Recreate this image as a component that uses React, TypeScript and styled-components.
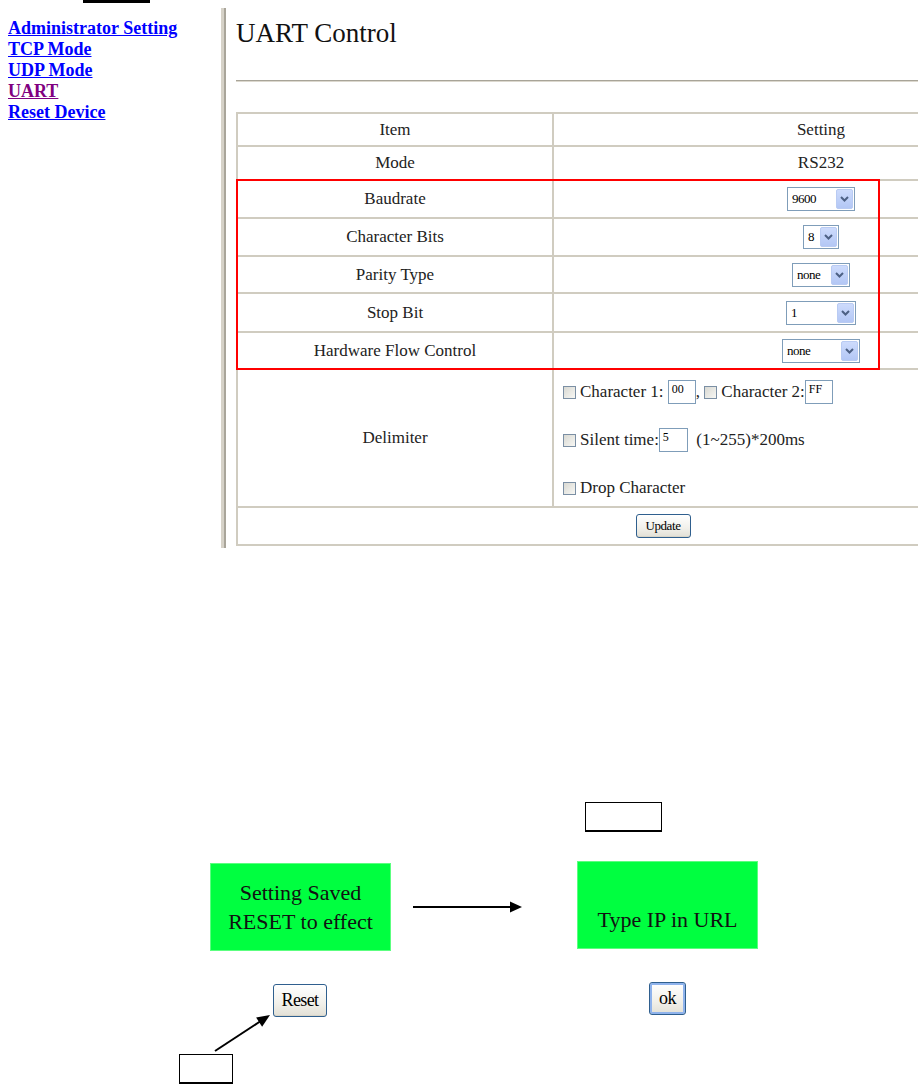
import React from 'react';
import styled, { createGlobalStyle } from 'styled-components';

const SERIF = `'Liberation Serif', 'Times New Roman', serif`;

const GlobalStyle = createGlobalStyle`
  html, body {
    margin: 0;
    padding: 0;
    background: #fff;
  }
  body {
    width: 918px;
    height: 1085px;
    overflow: hidden;
    font-family: ${SERIF};
    color: #222;
  }
`;

const Page = styled.div`
  width: 918px;
  height: 1085px;
  overflow: hidden;
`;

const TopMark = styled.div`
  margin-left: 83px;
  width: 67px;
  height: 3px;
  background: #000;
`;

const TopSection = styled.div`
  display: flex;
  height: 540px;
  margin-top: 5px;
`;

const Sidebar = styled.nav`
  width: 221px;
  box-sizing: border-box;
  padding: 10px 0 0 8px;
  display: flex;
  flex-direction: column;
  align-items: flex-start;
`;

const NavLink = styled.a<{ $visited?: boolean }>`
  font-family: ${SERIF};
  font-weight: bold;
  font-size: 18px;
  line-height: 21px;
  color: ${(p) => (p.$visited ? '#800080' : '#0000ff')};
  text-decoration: underline;
  cursor: pointer;
`;

const Divider = styled.div`
  width: 5px;
  box-sizing: border-box;
  border-left: 3px solid #d6d2c8;
  border-right: 2px solid #a9a59a;
`;

const Main = styled.main`
  flex: 1;
  min-width: 0;
  margin-left: 10px;
  overflow: hidden;
`;

const Title = styled.h1`
  margin: 9px 0 0;
  font-family: ${SERIF};
  font-weight: normal;
  font-size: 27px;
  line-height: 32px;
  color: #111;
`;

const Rule = styled.div`
  margin-top: 31px;
  height: 0;
  border-top: 1px solid #a8a498;
  border-bottom: 1px solid #dcd8ce;
`;

const TableWrap = styled.div`
  position: relative;
  margin-top: 30px;
  width: 852px;
`;

const Table = styled.table`
  width: 852px;
  border-collapse: collapse;
  table-layout: fixed;
  border: 2px solid #d0ccc0;
`;

const Row = styled.tr<{ $h: number }>`
  height: ${(p) => p.$h}px;
`;

const Cell = styled.td`
  border: 2px solid #d0ccc0;
  padding: 0;
  text-align: center;
  vertical-align: middle;
  font-family: ${SERIF};
  font-size: 17px;
  line-height: 20px;
  color: #222;
`;

const DelimCell = styled(Cell)`
  text-align: left;
  padding: 10px 0 6px 9px;
`;

const Annotation = styled.div`
  position: absolute;
  left: 0;
  top: 67px;
  width: 644px;
  height: 191px;
  box-sizing: border-box;
  border: 2px solid #ff0000;
  pointer-events: none;
`;

const SelectBox = styled.div<{ $w: number }>`
  display: inline-flex;
  align-items: stretch;
  justify-content: space-between;
  width: ${(p) => p.$w}px;
  height: 24px;
  box-sizing: border-box;
  border: 1px solid #7f9db9;
  background: #fff;
  padding: 1px;
  vertical-align: middle;
`;

const SelectText = styled.span`
  font-family: ${SERIF};
  font-size: 13px;
  line-height: 20px;
  letter-spacing: -0.5px;
  padding-left: 3px;
  color: #000;
`;

const SelectArrow = styled.span`
  width: 17px;
  box-sizing: border-box;
  background: linear-gradient(#cddbfc, #b3c7f5);
  border: 1px solid #b9cbf3;
  border-radius: 2px;
  display: flex;
  align-items: center;
  justify-content: center;
`;

const DelimLines = styled.div`
  display: flex;
  flex-direction: column;
  gap: 24px;
`;

const DelimLine = styled.div`
  display: flex;
  align-items: center;
  height: 24px;
  font-family: ${SERIF};
  font-size: 17px;
  line-height: 20px;
  color: #222;
  white-space: pre;
`;

const Check = styled.span`
  width: 13px;
  height: 13px;
  box-sizing: border-box;
  border: 1px solid #7b8fa4;
  background: linear-gradient(135deg, #d9d9d3, #f7f7f4);
  margin-right: 4px;
  flex: none;
`;

const TextInput = styled.span<{ $w: number }>`
  width: ${(p) => p.$w}px;
  height: 24px;
  box-sizing: border-box;
  border: 1px solid #7f9db9;
  font-family: ${SERIF};
  font-size: 12px;
  line-height: 14px;
  color: #000;
  padding: 1px 0 0 3px;
  flex: none;
`;

const XpButton = styled.button<{ $default?: boolean }>`
  box-sizing: border-box;
  padding: 0;
  border: 1px solid #2f5f8e;
  border-radius: 3px;
  background: linear-gradient(#ffffff, #f1f0ea 60%, #e2e0d6);
  color: #000;
  font-family: ${SERIF};
  box-shadow: ${(p) =>
    p.$default ? 'inset 0 0 0 2px #8fb3ec' : 'inset 0 -1px 0 #d8d5c8'};
`;

const UpdateButton = styled(XpButton)`
  width: 55px;
  height: 24px;
  font-size: 13px;
  letter-spacing: -0.4px;
`;

const Diagram = styled.section`
  position: relative;
  height: 537px;
`;

const Note = styled.div<{ $x: number; $y: number }>`
  position: absolute;
  left: ${(p) => p.$x}px;
  top: ${(p) => p.$y}px;
  width: 181px;
  height: 88px;
  box-sizing: border-box;
  border: 1px solid #5cff80;
  background: #00ff40;
  display: flex;
  flex-direction: column;
  justify-content: center;
  align-items: center;
  text-align: center;
  font-family: ${SERIF};
  font-size: 22px;
  line-height: 29px;
  color: #111;
  white-space: pre;
`;

const Frame = styled.div<{ $x: number; $y: number; $w: number; $h: number }>`
  position: absolute;
  left: ${(p) => p.$x}px;
  top: ${(p) => p.$y}px;
  width: ${(p) => p.$w}px;
  height: ${(p) => p.$h}px;
  box-sizing: border-box;
  border: 1px solid #000;
  border-bottom-width: 2px;
`;

const Placed = styled.div<{ $x: number; $y: number }>`
  position: absolute;
  left: ${(p) => p.$x}px;
  top: ${(p) => p.$y}px;
  line-height: 0;
`;

const DiagramButton = styled(XpButton)<{ $w: number }>`
  width: ${(p) => p.$w}px;
  height: 33px;
  font-size: 18px;
  letter-spacing: -0.6px;
`;

const Chevron = () => (
  <svg width="9" height="6" viewBox="0 0 9 6">
    <path d="M1 1 L4.5 4.5 L8 1" fill="none" stroke="#4d6185" strokeWidth="2" />
  </svg>
);

const Select = ({ value, width }: { value: string; width: number }) => (
  <SelectBox $w={width}>
    <SelectText>{value}</SelectText>
    <SelectArrow>
      <Chevron />
    </SelectArrow>
  </SelectBox>
);

const settings = [
  { item: 'Baudrate', value: '9600', w: 68, h: 38 },
  { item: 'Character Bits', value: '8', w: 36, h: 38 },
  { item: 'Parity Type', value: 'none', w: 58, h: 37 },
  { item: 'Stop Bit', value: '1', w: 70, h: 39 },
  { item: 'Hardware Flow Control', value: 'none', w: 78, h: 37 },
];

const navItems = [
  { label: 'Administrator Setting' },
  { label: 'TCP Mode' },
  { label: 'UDP Mode' },
  { label: 'UART', visited: true },
  { label: 'Reset Device' },
];

export default function App() {
  return (
    <Page>
      <GlobalStyle />
      <TopMark />
      <TopSection>
        <Sidebar>
          {navItems.map((n) => (
            <NavLink key={n.label} $visited={n.visited}>
              {n.label}
            </NavLink>
          ))}
        </Sidebar>
        <Divider />
        <Main>
          <Title>UART Control</Title>
          <Rule />
          <TableWrap>
            <Table>
              <colgroup>
                <col style={{ width: 316 }} />
                <col style={{ width: 536 }} />
              </colgroup>
              <tbody>
                <Row $h={33}>
                  <Cell>Item</Cell>
                  <Cell>Setting</Cell>
                </Row>
                <Row $h={34}>
                  <Cell>Mode</Cell>
                  <Cell>RS232</Cell>
                </Row>
                {settings.map((s) => (
                  <Row key={s.item} $h={s.h}>
                    <Cell>{s.item}</Cell>
                    <Cell>
                      <Select value={s.value} width={s.w} />
                    </Cell>
                  </Row>
                ))}
                <Row $h={136}>
                  <Cell>Delimiter</Cell>
                  <DelimCell>
                    <DelimLines>
                      <DelimLine>
                        <Check />
                        {'Character 1: '}
                        <TextInput $w={28}>00</TextInput>
                        {', '}
                        <Check />
                        {'Character 2:'}
                        <TextInput $w={28}>FF</TextInput>
                      </DelimLine>
                      <DelimLine>
                        <Check />
                        {'Silent time:'}
                        <TextInput $w={29}>5</TextInput>
                        {'  (1~255)*200ms'}
                      </DelimLine>
                      <DelimLine>
                        <Check />
                        {'Drop Character'}
                      </DelimLine>
                    </DelimLines>
                  </DelimCell>
                </Row>
                <Row $h={38}>
                  <Cell colSpan={2}>
                    <UpdateButton>Update</UpdateButton>
                  </Cell>
                </Row>
              </tbody>
            </Table>
            <Annotation />
          </TableWrap>
        </Main>
      </TopSection>

      <Diagram>
        <Frame $x={585} $y={254} $w={77} $h={30} />
        <Note $x={210} $y={315}>
          {'Setting Saved\nRESET to effect'}
        </Note>
        <Placed $x={410} $y={350}>
          <svg width="115" height="18" viewBox="0 0 115 18">
            <line x1="3" y1="9" x2="102" y2="9" stroke="#000" strokeWidth="2" />
            <polygon points="100,3.5 112,9 100,14.5" fill="#000" />
          </svg>
        </Placed>
        <Note $x={577} $y={313}>
          {' \nType IP in URL'}
        </Note>
        <Placed $x={273} $y={436}>
          <DiagramButton $w={54}>Reset</DiagramButton>
        </Placed>
        <Placed $x={649} $y={434}>
          <DiagramButton $w={37} $default>
            ok
          </DiagramButton>
        </Placed>
        <Placed $x={205} $y={460}>
          <svg width="75" height="50" viewBox="0 0 75 50">
            <line x1="10" y1="43" x2="55" y2="13.5" stroke="#000" strokeWidth="2" />
            <polygon points="65,7 57.1,18.7 51.1,9.5" fill="#000" />
          </svg>
        </Placed>
        <Frame $x={179} $y={506} $w={54} $h={30} />
      </Diagram>
    </Page>
  );
}
